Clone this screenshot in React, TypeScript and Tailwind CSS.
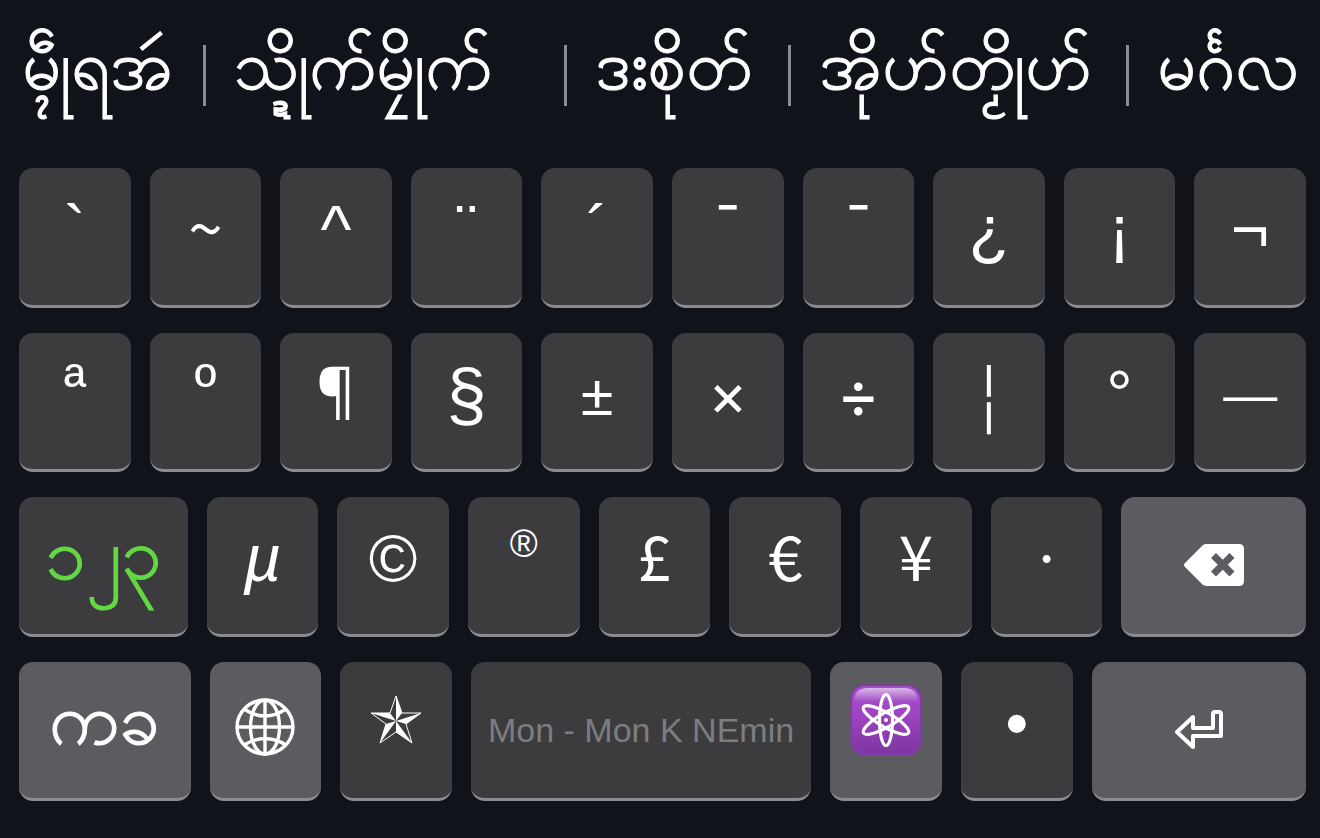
import type { ReactNode } from "react";
import clsx from "clsx";

// Suggestions shown above the keys
const suggestions = [
  { text: "မ္ၚဵုရအဴ", size: "grow-[205]" },
  { text: "သ္ဍိုက်မၠိုက်", size: "grow-[361]" },
  { text: "ဒးစိုတ်", size: "grow-[223]" },
  { text: "အိုဟ်တၟိုဟ်", size: "grow-[338]" },
  { text: "မင်္ဂလ", size: "grow-[193]" },
];

const accentKeys = ["`", "~", "^", "¨", "´", "¯", "ˉ", "¿", "¡", "¬"];
const symbolKeys = ["ª", "º", "¶", "§", "±", "×", "÷", "¦", "°", "—"];
const currencyKeys = ["©", "®", "£", "€", "¥", "·"];

const plainKey = "items-start pt-7 text-[66px] leading-[66px]";
const currencyKey =
  "items-start pt-6 font-['Noto_Sans_CJK_SC',sans-serif] text-[62px] leading-[66px]";
const mathKey = "items-start pt-7 font-['Inter',sans-serif] leading-[66px]";
const ordinalKey = "items-start pt-5 text-[60px] leading-[66px]";
const monKey =
  "items-start pt-6 text-[72px] leading-[66px] [-webkit-text-stroke:1px_currentColor]";

// Characters that need another face or size than the default
const keyStyles: Record<string, string> = {
  "~": currencyKey,
  "£": currencyKey,
  "€": currencyKey,
  "¥": currencyKey,
  "¦": currencyKey,
  "×": clsx(mathKey, "text-[60px]"),
  "·": clsx(mathKey, "text-[60px]"),
  "¯": clsx(mathKey, "text-[66px]"),
  "ˉ": clsx(mathKey, "text-[66px]"),
  "÷": clsx(mathKey, "text-[66px]"),
  "ª": ordinalKey,
  "º": ordinalKey,
  "¶": "items-start pt-6 font-['Noto_Sans',sans-serif] text-[60px] leading-[66px]",
  "§": "items-start pt-7 text-[72px] leading-[66px]",
  "±": "items-start pt-7 font-['Lato',sans-serif] text-[60px] leading-[66px]",
  "®": "items-start pt-7 text-[38px] leading-[38px]",
  "—": "items-start pt-7 text-[54px] leading-[66px]",
};

type KeyProps = {
  children: ReactNode;
  label?: string;
  size?: string;
  special?: boolean;
  className?: string;
};

function Key({ children, label, size = "grow-[112]", special, className = plainKey }: KeyProps) {
  return (
    <button
      type="button"
      aria-label={label}
      className={clsx(
        "flex min-w-0 basis-0 justify-center rounded-[14px] border-b-3 border-[#8b8b90]",
        special ? "bg-[#5b5b60]" : "bg-[#3c3c3e]",
        size,
        className
      )}
    >
      {children}
    </button>
  );
}

function Row({ children }: { children: ReactNode }) {
  return <div className="flex flex-1 gap-[19px]">{children}</div>;
}

function DeleteIcon() {
  return (
    <svg viewBox="0 0 60 42" className="h-[42px] w-[60px]" fill="none">
      <path
        d="M22 0H55Q60 0 60 5V37Q60 42 55 42H22Q19 42 17 39L1 23Q-1 21 1 19L17 3Q19 0 22 0Z"
        fill="#fff"
      />
      <path d="M29.5 11.5L48 30M48 11.5L29.5 30" stroke="#5b5b60" strokeWidth="7" />
    </svg>
  );
}

function GlobeIcon() {
  return (
    <svg viewBox="0 0 60 58" className="h-[58px] w-[60px]" fill="none" stroke="#fff" strokeWidth="3.4">
      <ellipse cx="30" cy="29" rx="28" ry="27" />
      <ellipse cx="30" cy="29" rx="14.5" ry="27" />
      <path d="M30 2V56M2 29H58" />
      <path d="M9 11Q30 25 51 11M9 47Q30 34 51 47" />
    </svg>
  );
}

function StarIcon() {
  return (
    <svg viewBox="0 0 52 50" className="h-[50px] w-[52px]" stroke="#fff" strokeWidth="1" fill="none">
      <path d="M26 2L32 19H51L36 30L42 49L26 38L10 49L16 30L1 19H20Z" />
      <path
        d="M26 27V2L32 19ZM26 27L51 19L36 30ZM26 27L42 49L26 38ZM26 27L10 49L16 30ZM26 27L1 19H20Z"
        fill="#fff"
        stroke="none"
      />
    </svg>
  );
}

function AtomIcon() {
  return (
    <svg viewBox="0 0 72 72" className="h-[72px] w-[72px]">
      <defs>
        <linearGradient id="atom-bg" x1="0" y1="0" x2="0" y2="1">
          <stop offset="0" stopColor="#a34fc6" />
          <stop offset="0.4" stopColor="#a044c4" />
          <stop offset="1" stopColor="#7d37a0" />
        </linearGradient>
        <linearGradient id="atom-shine" x1="0" y1="0" x2="0" y2="1">
          <stop offset="0" stopColor="#fff" stopOpacity="0.6" />
          <stop offset="1" stopColor="#fff" stopOpacity="0" />
        </linearGradient>
      </defs>
      <rect x="0.5" y="0.5" width="71" height="71" rx="14" fill="#843aa8" />
      <rect x="2" y="2" width="68" height="67" rx="13" fill="url(#atom-bg)" />
      <path d="M4 18Q4 4 18 4H54Q68 4 68 18Z" fill="url(#atom-shine)" />
      <g fill="none" stroke="#fff" strokeWidth="3.2">
        <ellipse cx="36" cy="36" rx="6.5" ry="25.5" />
        <ellipse cx="36" cy="36" rx="7" ry="26" transform="rotate(60 36 36)" />
        <ellipse cx="36" cy="36" rx="7" ry="26" transform="rotate(120 36 36)" />
      </g>
      <circle cx="36" cy="36" r="2" fill="#fff" />
    </svg>
  );
}

function ReturnIcon() {
  return (
    <svg
      viewBox="0 0 48 40"
      className="h-10 w-12"
      fill="none"
      stroke="#fff"
      strokeWidth="4"
      strokeLinejoin="round"
    >
      <path d="M2 22L18 7V18H38V4Q38 2 40 2H44Q46 2 46 4V26H18V37Z" />
    </svg>
  );
}

export default function App() {
  return (
    <main className="flex min-h-screen flex-col bg-[#10131a] font-['Liberation_Sans',Arial,sans-serif] text-white">
      {/* Suggestion bar */}
      <div className="flex h-[168px] items-start pt-[45px]">
        {suggestions.map((item, index) => (
          <button
            key={item.text}
            type="button"
            lang="mnw"
            className={clsx(
              "flex h-[61px] min-w-0 basis-0 items-start text-[68px] leading-[40px] whitespace-nowrap [-webkit-text-stroke:1px_currentColor]",
              index < suggestions.length - 1 && "border-r-3 border-[#8b8b90]",
              item.size
            )}
          >
            <span className={index === 0 ? "pl-[22px]" : "pl-7"}>{item.text}</span>
          </button>
        ))}
      </div>

      {/* Keys */}
      <div className="flex flex-1 flex-col gap-[25px] pr-[14px] pb-[37px] pl-[19px]">
        <Row>
          {accentKeys.map((char) => (
            <Key key={char} className={keyStyles[char]}>
              {char}
            </Key>
          ))}
        </Row>
        <Row>
          {symbolKeys.map((char) => (
            <Key key={char} className={keyStyles[char]}>
              {char}
            </Key>
          ))}
        </Row>
        <Row>
          <Key size="grow-[169]" className={clsx(monKey, "text-[#62d842]")}>
            ၁၂၃
          </Key>
          <Key className="items-start pt-7 text-[66px] leading-[66px] italic">µ</Key>
          {currencyKeys.map((char) => (
            <Key key={char} className={keyStyles[char]}>
              {char}
            </Key>
          ))}
          <Key size="grow-[185]" special label="Delete" className="items-center">
            <DeleteIcon />
          </Key>
        </Row>
        <Row>
          <Key size="grow-[172]" special className={monKey}>
            ကခ
          </Key>
          <Key special label="Next keyboard" className="items-start pt-9">
            <GlobeIcon />
          </Key>
          <Key label="Star" className="items-start pt-8">
            <StarIcon />
          </Key>
          <Key
            size="grow-[341]"
            className="items-center text-[34px] leading-[40px] whitespace-nowrap text-[#7d7d80]"
          >
            Mon - Mon K NEmin
          </Key>
          <Key special label="Atom" className="items-start pt-[22px]">
            <AtomIcon />
          </Key>
          <Key>•</Key>
          <Key size="grow-[215]" special label="Return" className="items-center">
            <ReturnIcon />
          </Key>
        </Row>
      </div>
    </main>
  );
}
